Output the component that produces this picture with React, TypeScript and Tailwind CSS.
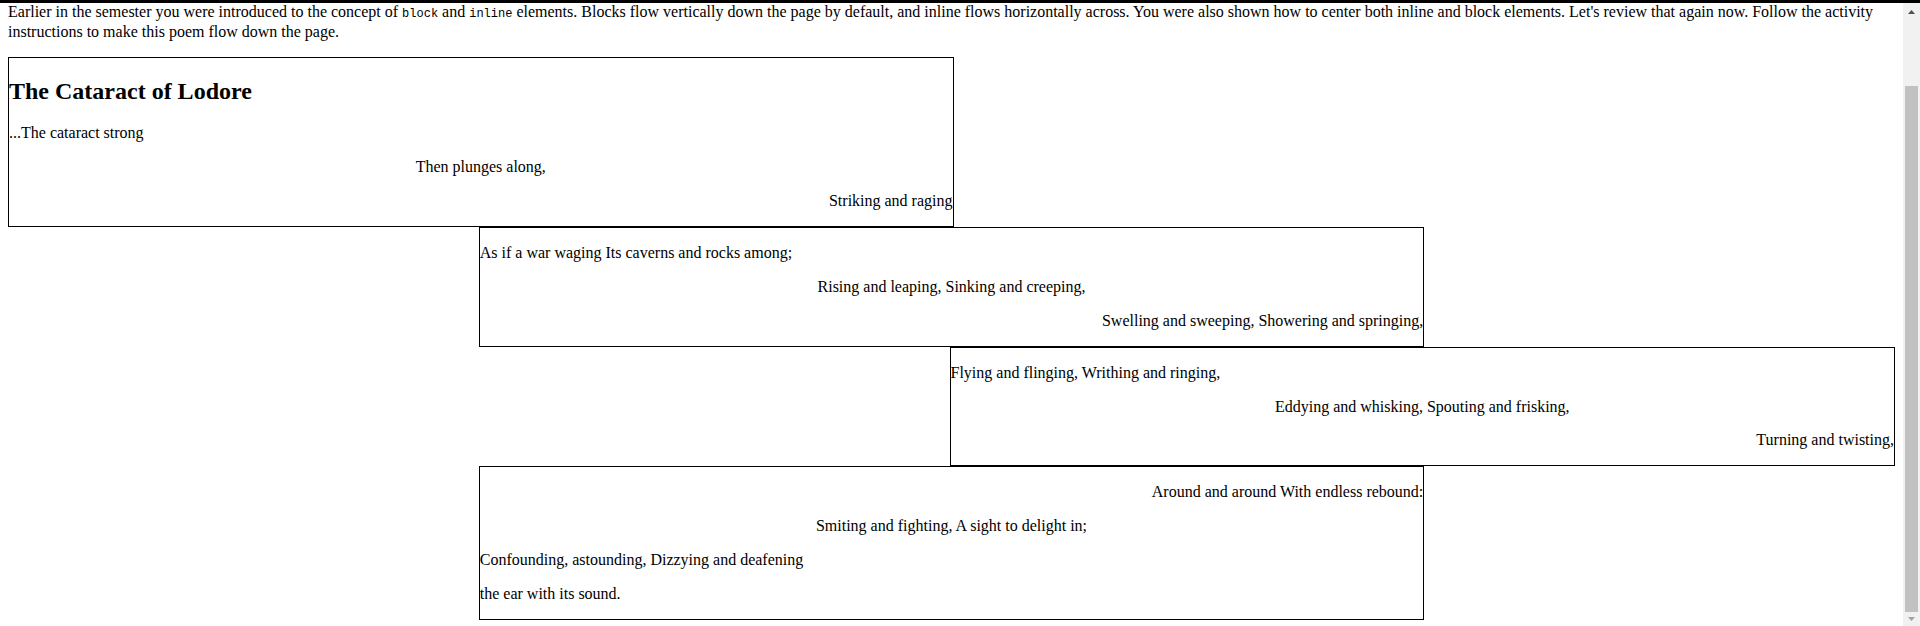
import React from "react";

const P = ({ align, children }: { align: "left" | "center" | "right"; children: React.ReactNode }) => {
  const cls =
    align === "left" ? "text-left" : align === "center" ? "text-center" : "text-right";
  return <p className={`my-4 leading-[17.9px] ${cls}`}>{children}</p>;
};

export default function App() {
  return (
    <div className="w-[1920px] h-[626px] overflow-hidden bg-white flex flex-col text-black font-['Liberation_Serif',serif] text-[16px]">
      <div className="h-[3px] bg-black shrink-0" />
      <div className="flex flex-1 min-h-0">
        <div className="flex-1 overflow-hidden px-2">
          <p className="mb-4 leading-[17.4px]">
            Earlier in the semester you were introduced to the concept of{" "}
            <code className="font-['Liberation_Mono',monospace] text-[12px]">block</code> and{" "}
            <code className="font-['Liberation_Mono',monospace] text-[12px]">inline</code> elements. Blocks flow
            vertically down the page by default, and inline flows horizontally across. You were also shown how to
            center both inline and block elements. Let's review that again now. Follow the activity instructions to
            make this poem flow down the page.
          </p>

          <div className="box-content w-1/2 border border-black">
            <h2 className="my-[19.92px] text-[24px] font-bold leading-[26.6px]">The Cataract of Lodore</h2>
            <P align="left">...The cataract strong</P>
            <P align="center">Then plunges along,</P>
            <P align="right">Striking and raging</P>
          </div>

          <div className="box-content w-1/2 border border-black mx-auto">
            <P align="left">As if a war waging Its caverns and rocks among;</P>
            <P align="center">Rising and leaping, Sinking and creeping,</P>
            <P align="right">Swelling and sweeping, Showering and springing,</P>
          </div>

          <div className="box-content w-1/2 border border-black ml-auto">
            <P align="left">Flying and flinging, Writhing and ringing,</P>
            <P align="center">Eddying and whisking, Spouting and frisking,</P>
            <P align="right">Turning and twisting,</P>
          </div>

          <div className="box-content w-1/2 border border-black mx-auto">
            <P align="right">Around and around With endless rebound:</P>
            <P align="center">Smiting and fighting, A sight to delight in;</P>
            <P align="left">Confounding, astounding, Dizzying and deafening</P>
            <P align="left">the ear with its sound.</P>
          </div>
        </div>

        <div className="w-[17px] shrink-0 bg-[#f1f1f1] flex flex-col">
          <div className="h-[17px] flex items-center justify-center">
            <svg width="7" height="4" viewBox="0 0 7 4">
              <polygon points="3.5,0 7,4 0,4" fill="#505050" />
            </svg>
          </div>
          <div className="flex-1 px-[2px] pt-[66px]">
            <div className="h-full bg-[#c1c1c1]" />
          </div>
          <div className="h-[14px] flex items-center justify-center">
            <svg width="7" height="4" viewBox="0 0 7 4">
              <polygon points="0,0 7,0 3.5,4" fill="#a3a3a3" />
            </svg>
          </div>
        </div>
      </div>
    </div>
  );
}
